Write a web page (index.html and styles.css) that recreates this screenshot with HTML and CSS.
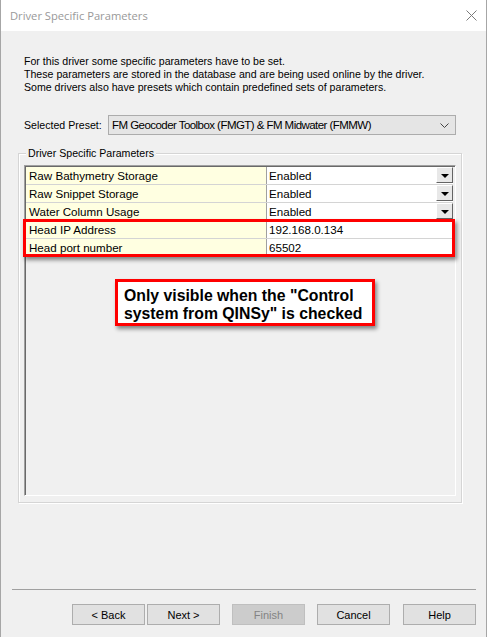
FILE: index.html
```html
<!DOCTYPE html>
<html lang="en">
<head>
    <meta charset="UTF-8">
    <title>Driver Specific Parameters</title>
    <link rel="stylesheet" href="styles.css">
</head>
<body>

    <div class="window">
        <!-- Title bar -->
        <div class="titlebar">
            <span class="title">Driver Specific Parameters</span>
            <svg class="close" width="11" height="11" viewBox="0 0 11 11">
                <path d="M0.5 0.5 L10.5 10.5 M10.5 0.5 L0.5 10.5" stroke="#7a7a7a" stroke-width="1" fill="none"/>
            </svg>
        </div>

        <div class="content">
            <div class="intro">
                For this driver some specific parameters have to be set.<br>
                These parameters are stored in the database and are being used online by the driver.<br>
                Some drivers also have presets which contain predefined sets of parameters.
            </div>

            <div class="preset-row">
                <span class="preset-label">Selected Preset:</span>
                <div class="combo">
                    <span>FM Geocoder Toolbox (FMGT) &amp; FM Midwater (FMMW)</span>
                    <svg width="9" height="5" viewBox="0 0 9 5">
                        <path d="M0.5 0.5 L4.5 4.5 L8.5 0.5" stroke="#444" stroke-width="1" fill="none"/>
                    </svg>
                </div>
            </div>

            <!-- Group box with the parameter grid -->
            <div class="group">
                <div class="group-label">Driver Specific Parameters</div>
                <div class="grid">
                    <div class="row">
                        <div class="cell-name">Raw Bathymetry Storage</div>
                        <div class="cell-value">Enabled<span class="drop"></span></div>
                    </div>
                    <div class="row">
                        <div class="cell-name">Raw Snippet Storage</div>
                        <div class="cell-value">Enabled<span class="drop"></span></div>
                    </div>
                    <div class="row">
                        <div class="cell-name">Water Column Usage</div>
                        <div class="cell-value">Enabled<span class="drop"></span></div>
                    </div>
                    <div class="row">
                        <div class="cell-name">Head IP Address</div>
                        <div class="cell-value">192.168.0.134</div>
                    </div>
                    <div class="row">
                        <div class="cell-name">Head port number</div>
                        <div class="cell-value">65502</div>
                    </div>

                    <!-- Annotations drawn over the grid -->
                    <div class="highlight"></div>
                    <div class="note">Only visible when the "Control system from QINSy" is checked</div>
                </div>
            </div>
        </div>

        <div class="footer">
            <div class="buttons">
                <button class="btn">&lt; Back</button>
                <button class="btn btn-next">Next &gt;</button>
                <button class="btn btn-disabled">Finish</button>
                <button class="btn btn-cancel">Cancel</button>
                <button class="btn btn-help">Help</button>
            </div>
        </div>
    </div>

</body>
</html>
```

FILE: styles.css
```css
body {
    margin: 0;
    background-color: #ffffff;
    font-family: "Liberation Sans", Arial, sans-serif;
    font-size: 10.6px;
    color: #000000;
}
.window {
    width: 485px;
    height: 637px;
    background-color: #f0f0f0;
    border-left: 1px solid #a6a6a6;
    border-right: 1px solid #a6a6a6;
    display: flex;
    flex-direction: column;
}
/* Title bar */
.titlebar {
    height: 31px;
    background-color: #ffffff;
    display: flex;
    align-items: center;
    justify-content: space-between;
    padding: 0 9px 0 9px;
    flex: none;
}
.title {
    font-family: "Open Sans", "Noto Sans", sans-serif;
    font-size: 11.2px;
    color: #999999;
    padding-bottom: 1px;
}
.close {
    display: block;
}
/* Main area */
.content {
    flex: 1;
    padding: 0 24px 0 17px;
}
.intro {
    margin-top: 24px;
    padding-left: 6px;
    line-height: 13px;
}
.preset-row {
    margin-top: 21px;
    padding-left: 6px;
    padding-right: 6px;
    display: flex;
    align-items: center;
}
.preset-label {
    width: 84px;
    flex: none;
}
.combo {
    flex: 1;
    height: 18px;
    border: 1px solid #acacac;
    background-color: #e5e5e5;
    display: flex;
    align-items: center;
    justify-content: space-between;
    padding: 0 6px 0 3px;
    font-size: 11.5px;
    letter-spacing: -0.55px;
}
.combo svg {
    display: block;
}
/* Group box */
.group {
    margin-top: 18px;
    border: 1px solid #d5d5d5;
    box-shadow: inset 1px 1px 0 #ffffff, 1px 1px 0 #ffffff;
    padding: 0 5px 6px 5px;
}
.group-label {
    width: max-content;
    margin-top: -7px;
    margin-left: 2px;
    padding: 0 2px;
    line-height: 13px;
    background-color: #f0f0f0;
}
.grid {
    margin-top: 5px;
    height: 328px;
    position: relative;
    border: 1px solid;
    border-color: #a0a0a0 #ffffff #ffffff #a0a0a0;
    box-shadow: inset 1px 1px 0 #696969;
    padding: 1px 2px 0 1px;
    background-color: #f0f0f0;
}
.row {
    display: flex;
    height: 17px;
    border-bottom: 1px solid #d4d4d4;
    font-size: 11.6px;
    line-height: 17px;
}
.cell-name {
    width: 237px;
    padding-left: 3px;
    background-color: #ffffe1;
    border-right: 1px solid #a0a0a0;
    white-space: nowrap;
}
.cell-value {
    flex: 1;
    padding-left: 2px;
    background-color: #ffffff;
    position: relative;
    white-space: nowrap;
}
/* Small dropdown button inside a value cell */
.drop {
    position: absolute;
    right: 0;
    top: 0;
    width: 17px;
    height: 16px;
    background-color: #e8e8e8;
    border-top: 1px solid #ffffff;
    border-left: 1px solid #ffffff;
    border-right: 1px solid #646464;
    border-bottom: 1px solid #646464;
    box-sizing: border-box;
}
.drop::after {
    content: "";
    position: absolute;
    left: 4px;
    top: 6px;
    border-left: 4px solid transparent;
    border-right: 4px solid transparent;
    border-top: 4px solid #000000;
}
.highlight {
    position: absolute;
    left: -2px;
    top: 53px;
    width: 426px;
    height: 32px;
    border: 3px solid #ff0000;
    box-shadow: 2px 3px 4px rgba(0, 0, 0, 0.45);
}
.note {
    position: absolute;
    left: 90px;
    top: 113px;
    width: 243px;
    height: 36px;
    padding: 5px 5px 0 6px;
    background-color: #ffffff;
    border: 3px solid #ff0000;
    box-shadow: 2px 3px 4px rgba(0, 0, 0, 0.45);
    font-weight: bold;
    font-size: 15.8px;
    line-height: 18px;
}
/* Footer with separator and buttons */
.footer {
    flex: none;
    height: 48px;
    margin: 0 10px 0 11px;
    border-top: 1px solid #a0a0a0;
    box-sizing: border-box;
}
.buttons {
    display: flex;
    padding: 14px 0 0 60px;
}
.btn {
    width: 73px;
    height: 21px;
    margin: 0;
    padding: 0;
    font-family: "Liberation Sans", Arial, sans-serif;
    font-size: 11px;
    color: #000000;
    background-color: #e1e1e1;
    border: 1px solid #adadad;
}
.btn-next {
    margin-left: 2px;
}
.btn-disabled {
    margin-left: 12px;
    background-color: #cccccc;
    border-color: #bfbfbf;
    color: #838383;
}
.btn-cancel {
    margin-left: 12px;
}
.btn-help {
    margin-left: 13px;
}
```
